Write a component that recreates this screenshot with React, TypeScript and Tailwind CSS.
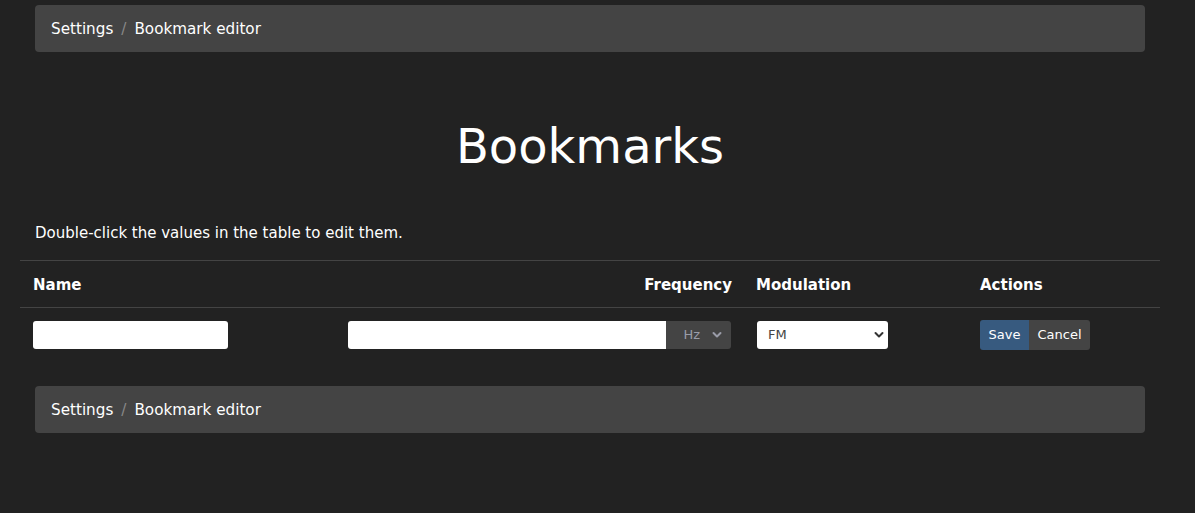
import React from "react";

function Chevron({ color }: { color: string }) {
  return (
    <svg width="10" height="8" viewBox="0 0 10 8" className="pointer-events-none">
      <path d="M1.5 2 L5 5.5 L8.5 2" fill="none" stroke={color} strokeWidth="2" strokeLinecap="round" strokeLinejoin="round" />
    </svg>
  );
}

function Breadcrumb() {
  return (
    <div className="mx-[15px] h-[47px] rounded-[4px] bg-[#444444] px-4 flex items-center pt-[1px] text-[15.2px] text-white">
      <span>Settings</span>
      <span className="px-2 text-[#888888]">/</span>
      <span>Bookmark editor</span>
    </div>
  );
}

export default function App() {
  return (
    <div
      className="min-h-[513px] w-full bg-[#222222] text-white"
      style={{ fontFamily: '"DejaVu Sans", Verdana, sans-serif' }}
    >
      <div className="ml-[20px] w-[1140px] pt-[5px]">
        <Breadcrumb />
        <h1 className="mt-[65px] text-center text-[48px] leading-[58px] font-normal">Bookmarks</h1>
        <p className="mx-[15px] mt-[47px] text-[15px] leading-[22px]">
          Double-click the values in the table to edit them.
        </p>
        <table className="mt-[16px] w-[1140px] table-fixed border-collapse text-[15px]">
          <colgroup>
            <col className="w-[316px]" />
            <col className="w-[408px]" />
            <col className="w-[224px]" />
            <col className="w-[192px]" />
          </colgroup>
          <thead>
            <tr className="border-t border-b border-[#444444]">
              <th className="h-[47px] px-3 pt-[2px] text-left font-bold">
                <span className="pl-[1px]">Name</span>
              </th>
              <th className="h-[47px] px-3 pt-[2px] text-right font-bold">Frequency</th>
              <th className="h-[47px] px-3 pt-[2px] text-left font-bold">Modulation</th>
              <th className="h-[47px] px-3 pt-[2px] text-left font-bold">Actions</th>
            </tr>
          </thead>
          <tbody>
            <tr>
              <td className="px-3 pt-[13px] pb-[12px] align-top">
                <div className="ml-[1px] h-[28px] w-[195px] rounded-[3px] bg-white" />
              </td>
              <td className="px-3 pt-[13px] pb-[12px] align-top">
                <div className="flex h-[28px] w-[383px]">
                  <div className="h-[28px] w-[318px] rounded-l-[3px] bg-white" />
                  <div className="flex h-[28px] w-[65px] items-center justify-end gap-[12px] rounded-r-[3px] bg-[#444444] pr-[9px] text-[13px] text-[#9a9ca8]">
                    <span>Hz</span>
                    <Chevron color="#9a9ca8" />
                  </div>
                </div>
              </td>
              <td className="px-3 pt-[13px] pb-[12px] align-top">
                <div className="ml-[1px] flex h-[28px] w-[131px] items-center justify-between rounded-[3px] bg-white pl-[11px] pr-[4px] text-[13px] text-[#444444]">
                  <span>FM</span>
                  <Chevron color="#333333" />
                </div>
              </td>
              <td className="px-3 pt-[12px] pb-[12px] align-top">
                <div className="flex h-[30px] text-[13px] text-white">
                  <button className="h-[30px] w-[49px] rounded-l-[3px] bg-[#375a7f]">Save</button>
                  <button className="h-[30px] w-[61px] rounded-r-[3px] bg-[#444444]">Cancel</button>
                </div>
              </td>
            </tr>
          </tbody>
        </table>
        <div className="mt-[24px]">
          <Breadcrumb />
        </div>
      </div>
    </div>
  );
}
